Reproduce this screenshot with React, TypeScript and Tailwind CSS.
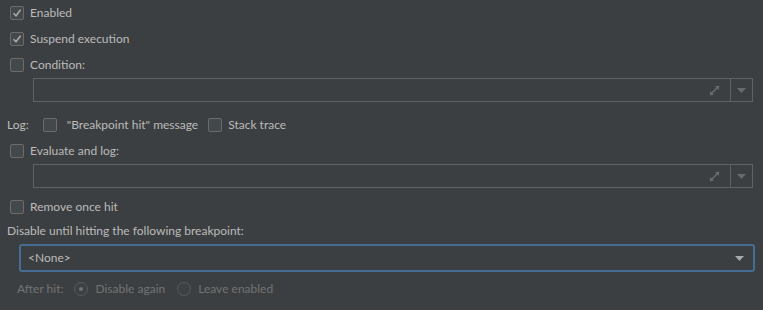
import React from 'react';

const font = { fontFamily: 'Lato, "Noto Sans", sans-serif' };

function Check({ checked = false }: { checked?: boolean }) {
  return (
    <span className="flex h-[14px] w-[14px] shrink-0 items-center justify-center rounded-[2px] border border-[#6b6b6b] bg-[#43494a]">
      {checked && (
        <svg width="10" height="10" viewBox="0 0 10 10">
          <path d="M1.5 5.2 L4 7.8 L8.6 1.8" fill="none" stroke="#a8a8a8" strokeWidth="1.6" />
        </svg>
      )}
    </span>
  );
}

function CheckRow({ label, checked }: { label: string; checked?: boolean }) {
  return (
    <div className="flex h-[26px] items-center gap-[6px] pl-[10px]">
      <Check checked={checked} />
      <span>{label}</span>
    </div>
  );
}

function ExprField() {
  return (
    <div className="ml-[33px] mr-[10px] flex h-[24px] border border-[#5f6162]">
      <div className="flex flex-1 items-center justify-end pr-[9px]">
        <svg width="13" height="13" viewBox="0 0 13 13">
          <path d="M2 11 L11 2" stroke="#6c6c6c" strokeWidth="1.4" />
          <path d="M7 2 L11 2 L11 6 Z" fill="#6c6c6c" />
          <path d="M2 7 L2 11 L6 11 Z" fill="#6c6c6c" />
        </svg>
      </div>
      <div className="flex w-[22px] items-center justify-center border-l border-[#5f6162]">
        <svg width="9" height="5" viewBox="0 0 9 5">
          <path d="M0 0 L9 0 L4.5 5 Z" fill="#6a6a6a" />
        </svg>
      </div>
    </div>
  );
}

function Radio({ selected = false }: { selected?: boolean }) {
  return (
    <span className="flex h-[14px] w-[14px] items-center justify-center rounded-full border border-[#585a5b] bg-[#3e4143]">
      {selected && <span className="h-[4px] w-[4px] rounded-full bg-[#717171]" />}
    </span>
  );
}

export default function App() {
  return (
    <div className="h-[310px] w-[763px] overflow-hidden bg-[#3c3f41] text-[12px] text-[#bbbbbb]" style={font}>
      <CheckRow label="Enabled" checked />
      <CheckRow label="Suspend execution" checked />
      <CheckRow label="Condition:" />
      <ExprField />

      <div className="mt-[10px] flex h-[26px] items-center pl-[7px]">
        <span>Log:</span>
        <span className="ml-[14px]"><Check /></span>
        <span className="ml-[10px]">"Breakpoint hit" message</span>
        <span className="ml-[10px]"><Check /></span>
        <span className="ml-[6px]">Stack trace</span>
      </div>

      <CheckRow label="Evaluate and log:" />
      <ExprField />

      <div className="mt-[6px]">
        <CheckRow label="Remove once hit" />
      </div>

      <div className="flex h-[22px] items-center pl-[7px]">Disable until hitting the following breakpoint:</div>

      <div className="ml-[19px] mr-[8px] mt-[2px] flex h-[28px] items-center justify-between rounded-[3px] border-2 border-[#466d94] pl-[7px] pr-[9px]">
        <span>&lt;None&gt;</span>
        <svg width="9" height="5" viewBox="0 0 9 5">
          <path d="M0 0 L9 0 L4.5 5 Z" fill="#a9a9a9" />
        </svg>
      </div>

      <div className="mt-[4px] flex h-[26px] items-center pl-[17px] text-[#737373]">
        <span>After hit:</span>
        <span className="ml-[11px]"><Radio selected /></span>
        <span className="ml-[7px]">Disable again</span>
        <span className="ml-[12px]"><Radio /></span>
        <span className="ml-[7px]">Leave enabled</span>
      </div>
    </div>
  );
}
